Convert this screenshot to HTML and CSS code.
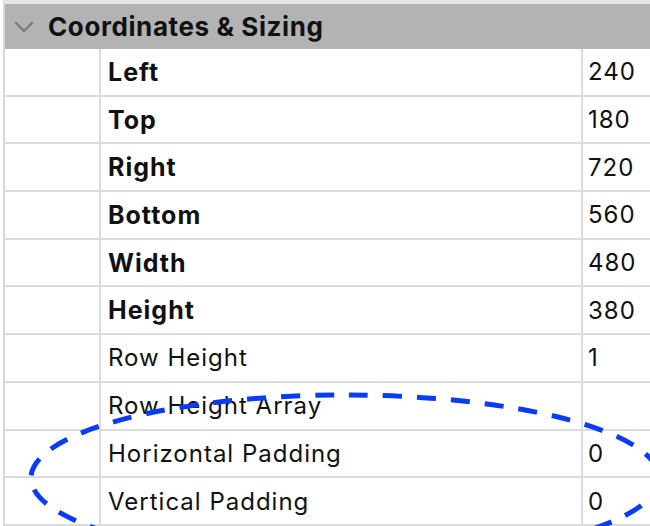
FILE: index.html
```html
<!DOCTYPE html>
<html lang="en">
<head>
  <meta charset="UTF-8" />
  <meta name="viewport" content="width=device-width, initial-scale=1.0"/>
  <title>Coordinates &amp; Sizing</title>
  <link rel="stylesheet" href="styles.css">
</head>
<body>

  <div class="panel">
    <div class="section-head">
      <svg class="chevron" width="20" height="12" viewBox="0 0 20 12">
        <path d="M2 2 L10 10 L18 2" fill="none" stroke="#7a7a7a" stroke-width="2.4" stroke-linecap="round" stroke-linejoin="round"/>
      </svg>
      <span class="section-title">Coordinates &amp; Sizing</span>
    </div>

    <div class="props">
      <div class="row"><div class="gutter"></div><div class="name strong">Left</div><div class="value">240</div></div>
      <div class="row"><div class="gutter"></div><div class="name strong">Top</div><div class="value">180</div></div>
      <div class="row"><div class="gutter"></div><div class="name strong">Right</div><div class="value">720</div></div>
      <div class="row"><div class="gutter"></div><div class="name strong">Bottom</div><div class="value">560</div></div>
      <div class="row"><div class="gutter"></div><div class="name strong">Width</div><div class="value">480</div></div>
      <div class="row"><div class="gutter"></div><div class="name strong">Height</div><div class="value">380</div></div>
      <div class="row"><div class="gutter"></div><div class="name">Row Height</div><div class="value">1</div></div>
      <div class="row"><div class="gutter"></div><div class="name">Row Height Array</div><div class="value"></div></div>
      <div class="row"><div class="gutter"></div><div class="name">Horizontal Padding</div><div class="value">0</div></div>
      <div class="row"><div class="gutter"></div><div class="name">Vertical Padding</div><div class="value">0</div></div>
    </div>

    <svg class="highlight" width="650" height="526" viewBox="0 0 650 526">
      <ellipse cx="345" cy="478" rx="314" ry="83" fill="none" stroke="#0a3cf5" stroke-width="5" stroke-dasharray="19 15"/>
    </svg>
  </div>

</body>
</html>
```

FILE: styles.css
```css
body {
  margin: 0;
  padding: 0;
  font-family: "Inter", "Liberation Sans", sans-serif;
  background-color: #fff;
  color: #111;
  height: 526px;
  overflow: hidden;
}

.panel {
  position: relative;
  height: 100%;
  margin-left: 3px;
  border-left: 2px solid #d8d8d8;
  border-top: 4px solid #e6e6e6;
}

.section-head {
  display: flex;
  align-items: center;
  height: 45px;
  padding-left: 9px;
  gap: 14px;
  background-color: #b3b3b3;
}

.section-title {
  font-size: 26px;
  font-weight: 700;
  letter-spacing: 0.6px;
  color: #111;
}

.props {
  display: flex;
  flex-direction: column;
}

.row {
  display: grid;
  grid-template-columns: 96px 482px 1fr;
  height: 47.7px;
  box-sizing: border-box;
  border-bottom: 2px solid #dcdcdc;
}

.row > div {
  display: flex;
  align-items: center;
}

.gutter,
.name {
  border-right: 2px solid #dcdcdc;
}

.name {
  padding-left: 7px;
  font-size: 24px;
  letter-spacing: 1px;
}

.name.strong {
  font-size: 25px;
  font-weight: 700;
}

.value {
  padding-left: 5px;
  font-size: 24px;
  letter-spacing: 1px;
}

.highlight {
  position: absolute;
  left: -5px;
  top: -4px;
  pointer-events: none;
}
```
